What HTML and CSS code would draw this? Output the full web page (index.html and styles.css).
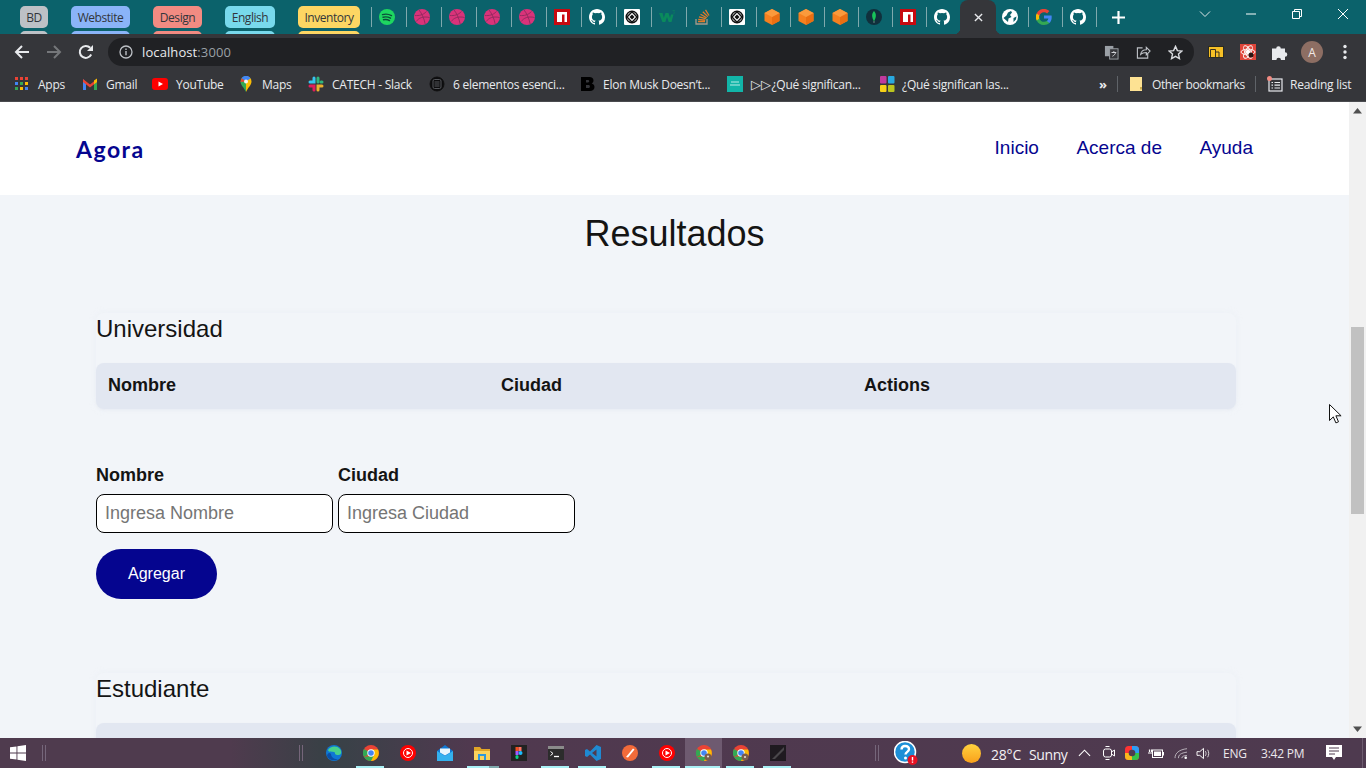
FILE: index.html
```html
<!DOCTYPE html>
<html lang="es">
<head>
<meta charset="utf-8">
<title>Agora</title>
<link rel="stylesheet" href="styles.css">
</head>
<body>
<svg class="defs" width="0" height="0" aria-hidden="true">
  <symbol id="spotify" viewBox="0 0 16 16"><circle cx="8" cy="8" r="8" fill="#1ed760"/><path d="M3.5 5.6c3-.8 6.3-.5 9 1M4 8.2c2.600-.6 5.300-.3 7.500 1M4.500 10.700c2.100-.5 4.300-.2 6 .9" fill="none" stroke="#0b4f3a" stroke-width="1.400" stroke-linecap="round"/></symbol>
  <symbol id="dribbble" viewBox="0 0 16 16"><circle cx="8" cy="8" r="8" fill="#d9337a"/><path d="M5 1c2.500 3 5 8 6.200 14M1 6.500c4 .3 8-.3 11.500-4M2.200 12.500c2.500-3.500 6.500-5.500 13.500-4" fill="none" stroke="#8f2a5c" stroke-width=".9"/></symbol>
  <symbol id="npm" viewBox="0 0 16 16"><rect width="16" height="16" fill="#c80a10"/><path d="M3 3h10v10h-2.500V5.500H8V13H3z" fill="#fff"/></symbol>
  <symbol id="github" viewBox="0 0 16 16"><path fill="#fff" d="M8 0C3.580 0 0 3.580 0 8c0 3.540 2.290 6.530 5.470 7.590.4.070.55-.17.55-.38v-1.400c-2.010.37-2.530-.49-2.690-.94-.09-.23-.48-.94-.82-1.130-.28-.15-.68-.52-.01-.53.63-.01 1.080.58 1.230.82.72 1.210 1.870.87 2.330.66.07-.52.28-.87.51-1.070-1.780-.2-3.640-.89-3.640-3.950 0-.87.31-1.590.82-2.150-.08-.2-.36-1.020.08-2.120 0 0 .67-.21 2.200.82a7.500 7.500 0 0 1 4 0c1.530-1.040 2.200-.82 2.200-.82.44 1.100.16 1.920.08 2.120.51.56.82 1.270.82 2.150 0 3.070-1.870 3.750-3.650 3.950.29.25.54.73.54 1.480v2.200c0 .21.15.46.55.38A8.013 8.013 0 0 0 16 8c0-4.420-3.580-8-8-8z"/><path fill="#0b626b" d="M5.200 4.600c-.8 1.800-.8 3.600.4 4.800 1 .7 3.800.7 4.800 0 1.200-1.200 1.200-3 .4-4.800-1.800.7-3.800.7-5.600 0z"/></symbol>
  <symbol id="codepen" viewBox="0 0 16 16"><rect width="16" height="16" rx="1" fill="#fff"/><circle cx="8" cy="8" r="5.800" fill="none" stroke="#111" stroke-width="1.400"/><path d="M8 2.800 13 8l-5 5.200L3 8z" fill="none" stroke="#111" stroke-width="1.400"/><path d="M8 5.500 10.500 8 8 10.500 5.500 8z" fill="#111"/></symbol>
  <symbol id="w3" viewBox="0 0 16 16"><path d="M0 4h3.500l1.300 5L6.500 4h3l1.500 5 1-3.500h2.500L12.500 13H9.700L8 8l-1.700 5H3.400z" fill="#0a8a5c"/><path d="M13.500 1.500h2v.6l-.8.8c.6 0 .9.4.9.8 0 .6-.5.9-1.200.9" fill="none" stroke="#0a8a5c" stroke-width=".5"/></symbol>
  <symbol id="stack" viewBox="0 0 16 16"><path d="M2 10v5h11v-5" fill="none" stroke="#a59a8c" stroke-width="1.300"/><path d="M4 12.500h7M4.200 10.300l7 .8M5 7.800l6.800 1.900M6.500 5.300l6.200 3.400M8.800 2.800l5 4.800M11.500 .8l3.500 5.700" fill="none" stroke="#e87a25" stroke-width="1.300"/></symbol>
  <symbol id="cube" viewBox="0 0 16 16"><path d="M8 0l7.500 4v8L8 16 .5 12V4z" fill="#f5801f"/><path d="M8 8l7.500-4v8L8 16z" fill="#ea6f12"/><path d="M8 0l7.500 4L8 8 .5 4z" fill="#fa9a3c"/></symbol>
  <symbol id="mongo" viewBox="0 0 16 16"><circle cx="8" cy="8" r="8" fill="#10303c"/><path d="M8 2c2.200 2.600 2.800 5 0 10.500C5.200 7 5.800 4.600 8 2z" fill="#18c25a"/><path d="M7.700 12h.6v2h-.6z" fill="#9fc7b2"/></symbol>
  <symbol id="globe" viewBox="0 0 16 16"><circle cx="8" cy="8" r="8" fill="#fff"/><path d="M1.500 9 4.500 6.500 6 3.500l3-1.500 1 1.500L8 6l1.500 2-3 1.500L6 13zM11.500 9l3-1.500-.6 3-2.400 2.500z" fill="#0b626b"/></symbol>
  <symbol id="google" viewBox="0 0 16 16"><path d="M15.700 8.200c0-.6-.05-1.100-.15-1.600H8v3h4.400a3.800 3.800 0 0 1-1.600 2.500v2h2.600c1.500-1.400 2.300-3.400 2.300-5.900z" fill="#4285f4"/><path d="M8 16c2.200 0 4-.7 5.400-2l-2.600-2c-.7.500-1.700.8-2.800.8-2.100 0-3.900-1.400-4.600-3.400H.7v2.100A8 8 0 0 0 8 16z" fill="#34a853"/><path d="M3.400 9.400a4.800 4.800 0 0 1 0-3V4.400H.7a8 8 0 0 0 0 7.100z" fill="#fbbc05"/><path d="M8 3.200c1.200 0 2.300.4 3.100 1.200l2.300-2.300A8 8 0 0 0 .7 4.400l2.700 2.100C4.100 4.600 5.900 3.200 8 3.200z" fill="#ea4335"/></symbol>
  <symbol id="chrome" viewBox="0 0 16 16"><circle cx="8" cy="8" r="8" fill="#ea4335"/><path d="M8 8 1 12a8 8 0 0 1 0-8z" fill="#34a853"/><path d="M1 12a8 8 0 0 0 7 4l4-5H8z" fill="#34a853"/><path d="M8 4.500h7a8 8 0 0 1-7 11.500l3.500-7z" fill="#fbbc05"/><circle cx="8" cy="8" r="3.700" fill="#fff"/><circle cx="8" cy="8" r="2.800" fill="#4285f4"/></symbol>
  <symbol id="ytm" viewBox="0 0 16 16"><circle cx="8" cy="8" r="8" fill="#f00"/><circle cx="8" cy="8" r="4.500" fill="none" stroke="#fff" stroke-width="1"/><path d="M6.500 5.500 11 8l-4.500 2.500z" fill="#fff"/></symbol>
</svg>

<div class="screen">
  <header class="tabstrip">
    <div class="group g-gray"><span class="pill">BD</span></div>
    <div class="group g-blue"><span class="pill">Webstite</span></div>
    <div class="group g-red"><span class="pill">Design</span></div>
    <div class="group g-cyan"><span class="pill">English</span></div>
    <div class="group g-yellow"><span class="pill">Inventory</span></div>
    <div class="tabs">
      <span class="tab"><svg class="fav"><use href="#spotify"/></svg></span>
      <span class="tab"><svg class="fav"><use href="#dribbble"/></svg></span>
      <span class="tab"><svg class="fav"><use href="#dribbble"/></svg></span>
      <span class="tab"><svg class="fav"><use href="#dribbble"/></svg></span>
      <span class="tab"><svg class="fav"><use href="#dribbble"/></svg></span>
      <span class="tab"><svg class="fav"><use href="#npm"/></svg></span>
      <span class="tab"><svg class="fav"><use href="#github"/></svg></span>
      <span class="tab"><svg class="fav"><use href="#codepen"/></svg></span>
      <span class="tab"><svg class="fav"><use href="#w3"/></svg></span>
      <span class="tab"><svg class="fav"><use href="#stack"/></svg></span>
      <span class="tab"><svg class="fav"><use href="#codepen"/></svg></span>
      <span class="tab tab-s"><svg class="fav"><use href="#cube"/></svg></span>
      <span class="tab tab-s"><svg class="fav"><use href="#cube"/></svg></span>
      <span class="tab tab-s"><svg class="fav"><use href="#cube"/></svg></span>
      <span class="tab tab-s"><svg class="fav"><use href="#mongo"/></svg></span>
      <span class="tab tab-s"><svg class="fav"><use href="#npm"/></svg></span>
      <span class="tab tab-s"><svg class="fav"><use href="#github"/></svg></span>
      <span class="tab-active"><svg class="ic10" viewBox="0 0 10 10"><path d="M1 1l8 8M9 1 1 9" stroke="#e8eaed" stroke-width="1.500"/></svg></span>
      <span class="tab tab-s no-sep"><svg class="fav"><use href="#globe"/></svg></span>
      <span class="tab tab-s"><svg class="fav"><use href="#google"/></svg></span>
      <span class="tab tab-s"><svg class="fav"><use href="#github"/></svg></span>
    </div>
    <span class="newtab"><svg class="ic12" viewBox="0 0 12 12"><path d="M6 0v12M0 6h12" stroke="#fff" stroke-width="2"/></svg></span>
    <div class="winctl">
      <svg class="wc wc-chev" viewBox="0 0 12 12"><path d="M1 3.500 6 8.500l5-5" fill="none" stroke="#dfe6e8" stroke-width="1"/></svg>
      <svg class="wc wc-min" viewBox="0 0 12 12"><path d="M1 6h10" stroke="#fff" stroke-width="1"/></svg>
      <svg class="wc wc-max" viewBox="0 0 12 12"><path d="M1.500 3.500h7v7h-7zM3.500 3.500v-2h7v7h-2" fill="none" stroke="#fff" stroke-width="1"/></svg>
      <svg class="wc wc-close" viewBox="0 0 12 12"><path d="M1 1l10 10M11 1 1 11" stroke="#fff" stroke-width="1"/></svg>
    </div>
  </header>

  <div class="toolbar">
    <svg class="tb-ic tb-back" viewBox="0 0 16 16"><path d="M15 8H2M8 2 2 8l6 6" fill="none" stroke="#e8eaed" stroke-width="2"/></svg>
    <svg class="tb-ic tb-fwd" viewBox="0 0 16 16"><path d="M1 8h13M8 2l6 6-6 6" fill="none" stroke="#75777a" stroke-width="2"/></svg>
    <svg class="tb-ic tb-rel" viewBox="0 0 16 16"><path d="M13.200 10.500A6 6 0 1 1 12.200 3.800" fill="none" stroke="#e8eaed" stroke-width="2"/><path d="M15 1v6H9z" fill="#e8eaed"/></svg>
    <div class="omnibox">
      <svg class="om-info" viewBox="0 0 14 14"><circle cx="7" cy="7" r="6" fill="none" stroke="#bdc1c6" stroke-width="1.300"/><path d="M7 6v4.200M7 3.500v1.400" stroke="#bdc1c6" stroke-width="1.400"/></svg>
      <span class="url">localhost<span class="url-dim">:3000</span></span>
      <svg class="om-ic om-tr" viewBox="0 0 16 16"><rect x="1" y="1" width="9" height="11" fill="#9aa0a6"/><rect x="6" y="4" width="9" height="11" fill="#35363a" stroke="#9aa0a6"/><path d="M8 8h5M10.500 6.500v1.500M9 12c2-1 3-2.500 3.500-4" stroke="#dadce0" fill="none"/></svg>
      <svg class="om-ic om-sh" viewBox="0 0 16 16"><path d="M7 3H1.500v11h11V9" fill="none" stroke="#bdc1c6" stroke-width="1.200"/><path d="M5 10c.5-3.500 3-5 6-5V2.500l4 4-4 4V8c-2.500 0-4.500.5-6 2z" fill="none" stroke="#bdc1c6" stroke-width="1.200"/></svg>
      <svg class="om-ic om-st" viewBox="0 0 16 16"><path d="M8 1.500l2 4.500 4.800.5-3.600 3.200 1 4.800L8 12.100l-4.200 2.400 1-4.800L1.200 6.500 6 6z" fill="none" stroke="#dadce0" stroke-width="1.500"/></svg>
    </div>
    <svg class="ext ext-1" viewBox="0 0 16 12"><rect x=".5" y=".5" width="15" height="11" fill="#f6c026" stroke="#2b2b20"/><path d="M2.500 11V3.500h5V11M7.500 6h3.500v5" fill="none" stroke="#3a3320" stroke-width="1"/></svg>
    <svg class="ext ext-2" viewBox="0 0 16 16"><rect width="16" height="16" fill="#e0453a"/><circle cx="8" cy="8" r="2.200" fill="#fff"/><g fill="none" stroke="#fff" stroke-width=".9"><ellipse cx="8" cy="8" rx="7" ry="2.800"/><ellipse cx="8" cy="8" rx="7" ry="2.800" transform="rotate(60 8 8)"/><ellipse cx="8" cy="8" rx="7" ry="2.800" transform="rotate(120 8 8)"/></g><circle cx="11" cy="11" r="2.500" fill="#2a1512"/></svg>
    <svg class="ext ext-3" viewBox="0 0 16 16"><path d="M0 4.500h4.200a2.300 2.300 0 1 1 4.600 0H13v3.700a2.300 2.300 0 1 1 0 4.600V16H9a2.300 2.300 0 1 0-4.600 0H0z" fill="#e8eaed"/></svg>
    <span class="avatar">A</span>
    <svg class="ext ext-4" viewBox="0 0 4 16"><circle cx="2" cy="2.500" r="1.700" fill="#e8eaed"/><circle cx="2" cy="8" r="1.700" fill="#e8eaed"/><circle cx="2" cy="13.500" r="1.700" fill="#e8eaed"/></svg>
  </div>

  <nav class="bookmarks">
    <span class="bm bm-apps"><svg class="bm-ic" viewBox="0 0 14 14"><rect width="3" height="3" x="0" y="0" fill="#ea4335"/><rect width="3" height="3" x="5" y="0" fill="#ea4335"/><rect width="3" height="3" x="10" y="0" fill="#ea4335"/><rect width="3" height="3" x="0" y="5" fill="#4285f4"/><rect width="3" height="3" x="5" y="5" fill="#34a853"/><rect width="3" height="3" x="10" y="5" fill="#fbbc05"/><rect width="3" height="3" x="0" y="10" fill="#34a853"/><rect width="3" height="3" x="5" y="10" fill="#fbbc05"/><rect width="3" height="3" x="10" y="10" fill="#4285f4"/></svg>Apps</span>
    <span class="bm bm-gmail"><svg class="bm-ic" viewBox="0 0 16 16"><path d="M1 3v11h3V7z" fill="#4285f4"/><path d="M15 3v11h-3V7z" fill="#34a853"/><path d="M1 3l7 5.500L15 3v3L8 11.500 1 6z" fill="#ea4335"/><path d="M12 4.500 15 2.500V6l-3 2.300z" fill="#fbbc05"/></svg>Gmail</span>
    <span class="bm bm-yt"><svg class="bm-ic" viewBox="0 0 16 16"><rect y="2" width="16" height="12" rx="3" fill="#f00"/><path d="M6.500 5.500 11 8l-4.500 2.500z" fill="#fff"/></svg>YouTube</span>
    <span class="bm bm-maps"><svg class="bm-ic" viewBox="0 0 16 16"><path d="M8 0a5.500 5.500 0 0 0-5.500 5.500c0 3.500 3.500 6 5.500 10.500z" fill="#34a853"/><path d="M8 0a5.500 5.500 0 0 1 5.500 5.500c0 3.500-3.500 6-5.500 10.500z" fill="#fbbc05"/><path d="M3.500 2.200A5.500 5.500 0 0 1 12.500 2.200L8 5.500z" fill="#4285f4"/><path d="M3.500 2.200 2.500 6 8 5.500z" fill="#ea4335"/><circle cx="8" cy="5.500" r="2" fill="#f4f4f4"/></svg>Maps</span>
    <span class="bm bm-slack"><svg class="bm-ic" viewBox="0 0 16 16"><g stroke-width="3" stroke-linecap="round"><path d="M6 2v4H2" stroke="#36c5f0" fill="none"/><path d="M10 2v4" stroke="#2eb67d"/><path d="M14 6h-1" stroke="#2eb67d"/><path d="M14 10h-4v4" stroke="#ecb22e" fill="none"/><path d="M2 10h4v4" stroke="#e01e5a" fill="none"/></g></svg>CATECH - Slack</span>
    <span class="bm bm-six"><svg class="bm-ic" viewBox="0 0 16 16"><circle cx="8" cy="8" r="7" fill="#0c0c0e" stroke="#111" stroke-width="1"/><rect x="4" y="3.500" width="8" height="9" rx="1.500" fill="none" stroke="#55575b"/><path d="M5.500 6h5M5.500 8h5M5.500 10h5" stroke="#55575b"/></svg>6 elementos esenci...</span>
    <span class="bm bm-elon"><svg class="bm-ic" viewBox="0 0 16 16"><path fill-rule="evenodd" d="M1 1h8.500c2.500 0 4 1.500 4 3.500 0 1.300-.7 2.400-1.800 2.900 1.700.5 2.800 1.800 2.800 3.600 0 2.500-2 4-4.700 4H1zM6 4v2.500h2c.8 0 1.200-.5 1.200-1.200S8.800 4 8 4zM6 9v3h2.500c.9 0 1.400-.6 1.400-1.500S9.400 9 8.500 9z" fill="#000"/></svg>Elon Musk Doesn’t...</span>
    <span class="bm bm-que"><svg class="bm-ic" viewBox="0 0 16 16"><rect width="16" height="16" fill="#12b5a8"/><path d="M4 6h8M3 9h10" stroke="#b8ece6" stroke-width="1"/></svg><span class="tri">▷▷</span>¿Qué significan...</span>
    <span class="bm bm-que2"><svg class="bm-ic" viewBox="0 0 16 16"><rect x="1" width="6.500" height="7.500" rx="1" fill="#c13a9d"/><rect x="9" width="6.500" height="7.500" rx="1" fill="#29a9e0"/><rect x="1" y="9" width="6.500" height="7" rx="1" fill="#f7d117"/><rect x="9" y="9" width="6.500" height="7" rx="1" fill="#bcc51f"/></svg>¿Qué significan las...</span>
    <span class="bm-more">»</span>
    <span class="bm-sep bm-sep-1"></span>
    <span class="bm bm-other"><svg class="bm-ic bm-folder" viewBox="0 0 12 14"><path d="M0 0h12v14H0z" fill="#fde293"/><path d="M10 10h2v2.500h-2z" fill="#c9a94a"/></svg>Other bookmarks</span>
    <span class="bm-sep bm-sep-2"></span>
    <span class="bm bm-read"><svg class="bm-ic" viewBox="0 0 16 16"><rect x="2" y="3" width="13" height="12" fill="none" stroke="#e8eaed" stroke-width="1.200"/><path d="M4.500 6.500h1.500M7.500 6.500h5.500M4.500 9.200h1.500M7.500 9.200h5.500M4.500 12h1.500M7.500 12h5.500" stroke="#e8eaed" stroke-width="1.200"/><circle cx="2.500" cy="2.500" r="2.500" fill="#f28b82"/></svg>Reading list</span>
  </nav>

  <div class="viewport">
    <div class="page">
      <div class="topbar">
        <span class="logo">Agora</span>
        <div class="nav">
          <a class="nav-link">Inicio</a>
          <a class="nav-link">Acerca de</a>
          <a class="nav-link">Ayuda</a>
        </div>
      </div>
      <main class="content">
        <h1 class="title">Resultados</h1>

        <section class="card">
          <h2 class="card-title">Universidad</h2>
          <div class="thead">
            <span class="th th-a">Nombre</span>
            <span class="th th-b">Ciudad</span>
            <span class="th">Actions</span>
          </div>
        </section>

        <form class="form">
          <div class="fields">
            <label class="field"><span class="label">Nombre</span><input class="input" placeholder="Ingresa Nombre"></label>
            <label class="field"><span class="label">Ciudad</span><input class="input" placeholder="Ingresa Ciudad"></label>
          </div>
          <button class="btn" type="button">Agregar</button>
        </form>

        <section class="card card-2">
          <h2 class="card-title">Estudiante</h2>
          <div class="thead"></div>
        </section>
      </main>
    </div>
    <div class="scrollbar">
      <svg class="sb-arrow" viewBox="0 0 9 6"><path d="M4.500 0 9 5.500H0z" fill="#505050"/></svg>
      <div class="thumb"></div>
      <svg class="sb-arrow sb-down" viewBox="0 0 9 6"><path d="M0 .5h9L4.500 6z" fill="#505050"/></svg>
    </div>
    <svg class="cursor" viewBox="0 0 13 20"><path d="M.5.5v16l3.800-3.600 2.600 6 2.600-1.100-2.600-6h5.200z" fill="#fff" stroke="#111" stroke-width="1"/></svg>
  </div>

  <footer class="taskbar">
    <svg class="start" viewBox="0 0 16 16"><path d="M0 2.300 6.500 1.400v6.100H0zM7.400 1.300 16 0v7.500H7.400zM0 8.400h6.500v6.200L0 13.700zM7.400 8.400H16V16l-8.600-1.200z" fill="#fff"/></svg>
    <span class="tb-grip grip-1"></span>
    <span class="tb-grip grip-2"></span>
    <div class="apps">
      <span class="app"><svg class="app-ic" viewBox="0 0 16 16"><circle cx="8" cy="8" r="8" fill="#0f78d4"/><path d="M2 5c2-4 9-5 12-1 2 2.500 1.500 6-1.500 6-2 0-4-.5-3.500-2.500-3-1.500-6 .5-7-2.500z" fill="#47d18c"/><path d="M5 9c0 3 3 5.500 7 5-3.500 2.500-9 1.500-11-3C1.500 8 3.500 7 5 9z" fill="#0a4fa8"/></svg></span>
      <span class="app on"><svg class="app-ic" viewBox="0 0 16 16"><use href="#chrome"/></svg></span>
      <span class="app"><svg class="app-ic" viewBox="0 0 16 16"><use href="#ytm"/></svg></span>
      <span class="app"><svg class="app-ic" viewBox="0 0 16 16"><path d="M0 6 8 0l8 6v10H0z" fill="#0f78d4"/><path d="M0 6l8 5 8-5v10H0z" fill="#34b1ee"/><path d="M3 3.500h10v4L8 10.500 3 7.500z" fill="#e8f6fd"/></svg></span>
      <span class="app on on-split"><svg class="app-ic" viewBox="0 0 16 16"><path d="M0 2h6l1.500 2H16v2H0z" fill="#e0a526"/><path d="M0 6h16v9H0z" fill="#fbd35c"/><rect x="4" y="9" width="8" height="6" fill="#2e98db"/><rect x="6" y="11" width="4" height="4" fill="#fbd35c"/></svg></span>
      <span class="app"><svg class="app-ic" viewBox="0 0 16 16"><rect width="16" height="16" fill="#222"/><circle cx="9.500" cy="8" r="2" fill="#1abcfe"/><rect x="4.500" y="2" width="3" height="4" fill="#f24e1e"/><rect x="7.500" y="2" width="3" height="4" fill="#ff7262"/><rect x="4.500" y="6" width="3" height="4" fill="#a259ff"/><rect x="4.500" y="10" width="3" height="4" rx="1.500" fill="#0acf83"/></svg></span>
      <span class="app on"><svg class="app-ic" viewBox="0 0 16 16"><rect y="1" width="16" height="14" fill="#2c2c2c"/><rect y="1" width="16" height="3" fill="#8b8b8b"/><path d="M2.500 6.500 5 8.500l-2.500 2" fill="none" stroke="#fff" stroke-width="1"/><path d="M6 11.500h5" stroke="#fff" stroke-width="1.300"/></svg></span>
      <span class="app on"><svg class="app-ic" viewBox="0 0 16 16"><path d="M11.500 0 16 2v12l-4.500 2L5 9.500 2 12l-2-1V5l2-1 3 2.500z" fill="#1f8ad2"/><path d="M11.500 4.500v7L7 8z" fill="#4f3b4e"/></svg></span>
      <span class="app"><svg class="app-ic" viewBox="0 0 16 16"><circle cx="8" cy="8" r="8" fill="#f26b3a"/><path d="M4 12 11 3.500l1.500 1L6 12.500z" fill="#fff"/></svg></span>
      <span class="app on"><svg class="app-ic" viewBox="0 0 16 16"><use href="#ytm"/></svg></span>
      <span class="app on active"><svg class="app-ic" viewBox="0 0 16 16"><use href="#chrome"/><circle cx="12" cy="12" r="3.500" fill="#7a5d4c"/><circle cx="12" cy="11.500" r="1.100" fill="#e8dcd2"/></svg></span>
      <span class="app on"><svg class="app-ic" viewBox="0 0 16 16"><use href="#chrome"/><circle cx="12" cy="12" r="3.500" fill="#7a5d4c"/><circle cx="12" cy="12" r="1.100" fill="#e8dcd2"/></svg></span>
      <span class="app on"><svg class="app-ic" viewBox="0 0 16 16"><rect width="16" height="16" fill="#1f1a20"/><path d="M2 14 14 2v3L5 14z" fill="#4a474b"/></svg></span>
    </div>
    <span class="tb-grip grip-3"></span>
    <svg class="help" viewBox="0 0 24 24"><circle cx="11" cy="11" r="10.500" fill="#1d8fd6" stroke="#fff" stroke-width="1.500"/><path d="M7.500 8.500C7.700 6 9.500 5 11 5c2.500 0 4 1.500 4 3.300 0 2.500-3.500 2.700-3.500 5.200" fill="none" stroke="#fff" stroke-width="2.400"/><circle cx="11.500" cy="17" r="1.500" fill="#fff"/><circle cx="18.500" cy="19" r="5" fill="#e81123"/><path d="M18.500 16v3.500M18.500 20.500v1.300" stroke="#fff" stroke-width="1.400"/></svg>
    <span class="sun"></span>
    <span class="weather">28°C</span>
    <span class="weather weather-2">Sunny</span>
    <svg class="tray tray-caret" viewBox="0 0 14 8"><path d="M1 7l6-6 6 6" fill="none" stroke="#fff" stroke-width="1.200"/></svg>
    <svg class="tray tray-meet" viewBox="0 0 12 16"><rect x=".5" y="4" width="8" height="8" rx="2" fill="none" stroke="#fff"/><path d="M8.500 7l3-2v6l-3-2M2.500 1.500h4M2.500 14.500h4" fill="none" stroke="#fff"/></svg>
    <svg class="tray tray-col" viewBox="0 0 16 16"><rect width="16" height="16" rx="4" fill="#f33"/><path d="M8 0h4a4 4 0 0 1 4 4v4H8z" fill="#2a9df4"/><path d="M16 8v4a4 4 0 0 1-4 4H8V8z" fill="#34c24a"/><path d="M0 8h8v8H4a4 4 0 0 1-4-4z" fill="#f9b81c"/><circle cx="8" cy="8" r="3.800" fill="#4e3a4f"/></svg>
    <svg class="tray tray-bat" viewBox="0 0 16 12"><rect x="4.500" y="3" width="10" height="7.500" fill="none" stroke="#fff"/><rect x="6" y="4.500" width="7" height="4.500" fill="#fff"/><path d="M15.500 5v3.500" stroke="#fff"/><path d="M0 6h4M1.500 2.500V5M3.500 2.500V5" stroke="#fff" stroke-width="1.200"/></svg>
    <svg class="tray tray-wifi" viewBox="0 0 16 14"><path d="M1 13C1 7 6 3 15 2M5 13c0-4 3-6 10-7M9 13c0-2 2-3 6-3" fill="none" stroke="#c8c2c9" stroke-width="1"/><circle cx="13.500" cy="12.500" r="1.500" fill="#fff"/></svg>
    <svg class="tray tray-vol" viewBox="0 0 16 14"><path d="M1 5h3l4-3.500v11L4 9H1z" fill="none" stroke="#fff"/><path d="M10 4.500c1 1.500 1 3.500 0 5M12.500 3c1.500 2.500 1.500 5.500 0 8" fill="none" stroke="#e0dce0"/></svg>
    <span class="tray-txt eng">ENG</span>
    <span class="tray-txt clock">3:42 PM</span>
    <svg class="tray tray-note" viewBox="0 0 16 16"><path d="M0 0h16v12H10l-2 3-2-3H0z" fill="#fff"/><path d="M3 3h10M3 6h10M3 9h6" stroke="#4e3a4f"/></svg>
    <span class="desk-line"></span>
  </footer>
</div>
</body>
</html>
```

FILE: styles.css
```css
* { box-sizing: border-box; }
html, body { margin: 0; padding: 0; height: 100%; overflow: hidden; }
body { font-family: "Liberation Sans", Arial, sans-serif; background: #f2f5f9; }
.defs { position: absolute; }
.screen { width: 1366px; height: 768px; display: flex; flex-direction: column; overflow: hidden; }

/* tab strip */
.tabstrip { flex: 0 0 34px; background: #0b626b; display: flex; overflow: hidden; }
.group { height: 40px; padding-top: 6px; position: relative; flex: 0 0 auto; }
.pill { display: flex; align-items: center; justify-content: center; height: 22px; border-radius: 5px; font: 12px "Open Sans", sans-serif; letter-spacing: -.45px; color: #32363c; }
.group::after { content: ""; display: block; height: 22px; margin-top: 3px; border-radius: 5px; background: inherit; }
.g-gray { margin-left: 20px; width: 28px; }
.g-gray .pill, .g-gray::after { background: #bdc1c6; }
.g-blue { margin-left: 23px; width: 59px; }
.g-blue .pill, .g-blue::after { background: #8ab4f8; }
.g-red { margin-left: 23px; width: 49px; }
.g-red .pill, .g-red::after { background: #f28b82; }
.g-cyan { margin-left: 23px; width: 50px; }
.g-cyan .pill, .g-cyan::after { background: #78d9ec; }
.g-yellow { margin-left: 23px; width: 62px; }
.g-yellow .pill, .g-yellow::after { background: #fdd663; }
.tabs { display: flex; margin-left: 11px; height: 34px; }
.tab { flex: 0 0 35px; height: 34px; display: flex; align-items: center; justify-content: center; position: relative; padding-right: 3px; }
.tab-s { flex-basis: 34px; padding-right: 2px; }
.tab::before { content: ""; position: absolute; left: 0; top: 7px; height: 20px; width: 1px; background: #7fa9ad; }
.no-sep::before { display: none; }
.fav { width: 16px; height: 16px; display: block; }
.tab-active { flex: 0 0 36px; height: 34px; background: #35363a; border-radius: 8px 8px 0 0; display: flex; align-items: center; justify-content: center; margin-right: -2px; position: relative; z-index: 1; }
.tab-active::before, .tab-active::after { content: ""; position: absolute; bottom: 0; width: 6px; height: 6px; }
.tab-active::before { left: -6px; background: radial-gradient(circle at 0 0, transparent 6px, #35363a 6.500px); }
.tab-active::after { right: -6px; background: radial-gradient(circle at 100% 0, transparent 6px, #35363a 6.500px); }
.ic10 { width: 9px; height: 9px; }
.ic12 { width: 13px; height: 13px; display: block; }
.newtab { flex: 0 0 auto; position: relative; padding: 11px 0 0 16px; height: 34px; }
.newtab::before { content: ""; position: absolute; left: 0; top: 7px; height: 20px; width: 1px; background: #7fa9ad; }
.winctl { margin-left: auto; display: flex; position: relative; width: 200px; height: 34px; }
.wc { width: 12px; height: 12px; flex: 0 0 auto; margin-top: 8px; }
.wc-chev { margin-left: 33px; }
.wc-min { margin-left: 34px; }
.wc-max { margin-left: 34px; }
.wc-close { margin-left: 34px; }

/* toolbar */
.toolbar { flex: 0 0 34px; background: #35363a; display: flex; align-items: center; padding-top: 2px; }
.tb-ic { width: 16px; height: 16px; flex: 0 0 auto; }
.tb-back { margin-left: 14px; }
.tb-fwd { margin-left: 16px; }
.tb-rel { margin-left: 16px; }
.omnibox { margin-left: 14px; width: 1086px; height: 28px; border-radius: 14px; background: #202124; display: flex; align-items: center; }
.om-info { width: 14px; height: 14px; margin-left: 11px; }
.url { margin-left: 9px; font: 13px "Open Sans", sans-serif; color: #e8eaed; letter-spacing: .1px; }
.url-dim { color: #9aa0a6; }
.om-ic { width: 15px; height: 15px; flex: 0 0 auto; }
.om-tr { margin-left: auto; }
.om-sh { margin-left: 17px; }
.om-st { margin-left: 17px; margin-right: 11px; }
.ext { flex: 0 0 auto; }
.ext-1 { width: 16px; height: 12px; margin-left: 14px; }
.ext-2 { width: 16px; height: 16px; margin-left: 16px; }
.ext-3 { width: 16px; height: 16px; margin-left: 16px; }
.avatar { flex: 0 0 22px; height: 22px; border-radius: 50%; margin-left: 13px; background: #8d6e63; color: #f1e9e5; font: 12px "Open Sans", sans-serif; display: flex; align-items: center; justify-content: center; }
.ext-4 { width: 4px; height: 16px; margin-left: 20px; }

/* bookmarks */
.bookmarks { flex: 0 0 34px; background: #35363a; display: flex; align-items: center; color: #e8eaed; font: 12px "Open Sans", sans-serif; letter-spacing: -.25px; box-shadow: inset 0 -1px 0 #4a4b4f; padding: 0 0 2px 15px; }
.bm { display: flex; align-items: center; flex: 0 0 auto; white-space: nowrap; }
.bm-ic { width: 16px; height: 16px; flex: 0 0 auto; margin-right: 8px; }
.bm-apps { width: 67px; }
.bm-apps .bm-ic { width: 14px; height: 14px; margin-right: 9px; }
.bm-gmail { width: 70px; }
.bm-yt { width: 86px; }
.bm-maps { width: 70px; }
.bm-slack { width: 121px; }
.bm-six { width: 151px; }
.bm-elon { width: 147px; }
.bm-elon .bm-ic { margin-right: 7px; }
.bm-que { width: 152px; }
.tri { font-size: 13px; letter-spacing: .2px; }
.bm-que2 { width: 220px; }
.bm-que2 .bm-ic { margin-right: 7px; }
.bm-more { flex: 0 0 18px; font-size: 13px; font-weight: 700; }
.bm-sep { width: 1px; height: 16px; background: #5f6368; flex: 0 0 auto; }
.bm-sep-1 { margin-right: 12px; }
.bm-other { width: 125px; letter-spacing: -.38px; }
.bm-folder { width: 12px; height: 14px; margin-right: 10px; }
.bm-sep-2 { margin-right: 11px; }
.bm-read .bm-ic { margin-right: 7px; }

/* page */
.viewport { flex: 1 1 0; min-height: 0; display: flex; position: relative; overflow: hidden; }
.page { flex: 1 1 0; min-width: 0; background: #f2f5f9; overflow: hidden; color: #141414; }
.topbar { height: 93px; background: #fff; display: flex; justify-content: space-between; padding: 0 96px 0 76px; }
.logo { font: 700 23px Lato, sans-serif; color: #05058f; letter-spacing: 1.500px; margin-top: 34px; line-height: 27px; }
.nav { display: flex; gap: 37.500px; margin-top: 34px; }
.nav-link { font-size: 19px; line-height: 23px; color: #05058f; }
.title { margin: 18px 0 0; font-size: 36px; font-weight: 400; line-height: 41px; text-align: center; }
.card { margin: 59px 113px 0 96px; height: 96px; border-radius: 8px; box-shadow: 0 0 6px rgba(226,232,240,.35); }
.card-title { margin: 0; padding-top: 2px; font-size: 24px; font-weight: 400; line-height: 28px; }
.thead { margin-top: 20px; height: 46px; border-radius: 8px; background: #e2e7f1; display: flex; align-items: center; padding-left: 12px; box-shadow: 0 1px 2px rgba(226,232,240,.6); }
.th { font-size: 18px; font-weight: 700; line-height: 21px; margin-top: -2px; }
.th-a { width: 393px; }
.th-b { width: 363px; }
.form { margin: 56px 113px 0 96px; }
.fields { display: flex; gap: 5px; }
.field { display: flex; flex-direction: column; width: 237px; }
.label { font-size: 18px; font-weight: 700; line-height: 21px; margin-bottom: 8px; }
.input { height: 39px; width: 237px; border: 1px solid #000; border-radius: 8px; padding: 0 8px; background: #fff; font: 18px "Liberation Sans", Arial, sans-serif; color: #111; outline: none; }
.input::placeholder { color: #757575; opacity: 1; }
.btn { display: block; margin-top: 16px; width: 121px; height: 50px; border: 0; border-radius: 25px; background: #05058f; color: #fff; font: 16px "Liberation Sans", Arial, sans-serif; padding: 0; }
.card-2 { margin-top: 74px; }

/* scrollbar */
.scrollbar { flex: 0 0 17px; background: #f1f1f1; display: flex; flex-direction: column; align-items: center; padding: 6px 0; }
.sb-arrow { width: 9px; height: 6px; flex: 0 0 auto; }
.sb-down { margin-top: auto; }
.thumb { width: 13px; height: 187px; margin-top: 213px; background: #c1c1c1; flex: 0 0 auto; }
.cursor { position: absolute; left: 1329px; top: 302px; width: 13px; height: 20px; }

/* taskbar */
.taskbar { flex: 0 0 30px; display: flex; align-items: center; position: relative; color: #f4f1f4; background: linear-gradient(90deg, #4f3b4e 0, #4f3b4e 230px, #3a4046 320px, #3a4148 345px, #50394f 470px, #4e3a4f 1366px); font: 13px "Open Sans", sans-serif; }
.start { width: 16px; height: 16px; margin-left: 10px; flex: 0 0 auto; }
.tb-grip { width: 4px; height: 16px; border-left: 1px solid #75667a; border-right: 1px solid #75667a; flex: 0 0 auto; }
.grip-1 { margin-left: 16px; }
.grip-2 { margin-left: 253px; }
.apps { display: flex; margin-left: 12px; height: 30px; }
.app { width: 37px; height: 30px; display: flex; align-items: center; justify-content: center; position: relative; }
.app-ic { width: 16px; height: 16px; display: block; }
.app.on::after { content: ""; position: absolute; left: 4px; right: 5px; bottom: 0; height: 2px; background: #a9f0f5; }
.app.on-split::after { right: 1px; background: linear-gradient(90deg, #a9f0f5 70%, #7fa9ad 70%); }
.active { background: #6e5a70; }
.app.active::after { left: 0; right: 2px; }
.grip-3 { margin-left: 79px; }
.help { width: 24px; height: 24px; margin-left: 15px; flex: 0 0 auto; }
.sun { width: 19px; height: 19px; border-radius: 50%; margin-left: 44px; flex: 0 0 auto; background: linear-gradient(180deg, #ffd23f, #f9a01b); }
.weather { margin: 2px 0 0 10px; font-size: 14px; letter-spacing: -.2px; width: 30px; white-space: nowrap; }
.weather-2 { margin-left: 8px; width: 38px; letter-spacing: -.4px; }
.tray { flex: 0 0 auto; }
.tray-caret { width: 13px; height: 8px; margin-left: 11px; }
.tray-meet { width: 12px; height: 16px; margin-left: 12px; }
.tray-col { width: 14px; height: 14px; margin-left: 10px; }
.tray-bat { width: 16px; height: 12px; margin-left: 9px; }
.tray-wifi { width: 14px; height: 12px; margin-left: 10px; }
.tray-vol { width: 15px; height: 13px; margin-left: 8px; }
.tray-txt { font-size: 12px; color: #ece8ec; white-space: nowrap; letter-spacing: -.2px; }
.eng { margin-left: 12px; width: 38px; }
.clock { width: 61px; }
.tray-note { width: 16px; height: 16px; margin-left: 4px; }
.desk-line { width: 1px; height: 30px; background: #6d5c6f; margin-left: 20px; }
```
